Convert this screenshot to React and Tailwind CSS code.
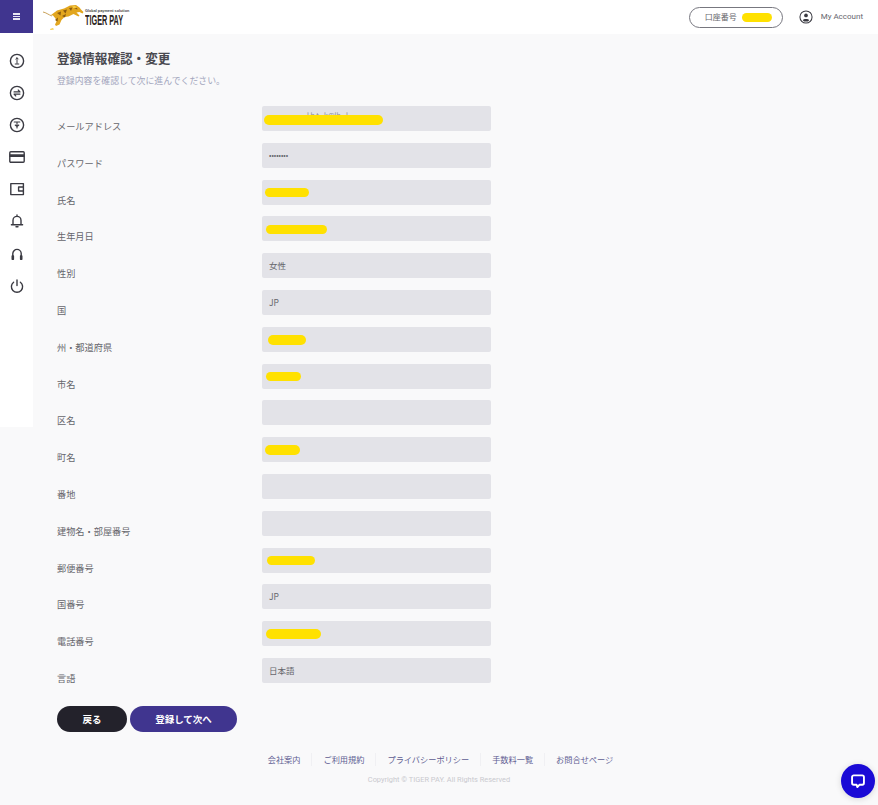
const jp = '"Noto Sans CJK JP", "Noto Sans", sans-serif'

const rows = [
  { label: 'メールアドレス', mark: 'ml-[2px] w-[119px] mt-[3px]', ghost: true },
  { label: 'パスワード', value: '••••••••', small: true },
  { label: '氏名', mark: 'ml-[3px] w-[44px] mt-[1px]' },
  { label: '生年月日', mark: 'ml-[4px] w-[61px] mt-[1px]' },
  { label: '性別', value: '女性' },
  { label: '国', value: 'JP' },
  { label: '州・都道府県', mark: 'ml-[6px] w-[38px] mt-[1px]' },
  { label: '市名', mark: 'ml-[4px] w-[35px] mt-[1px]', dot: true },
  { label: '区名' },
  { label: '町名', mark: 'ml-[3px] w-[35px] mt-[1px]' },
  { label: '番地' },
  { label: '建物名・部屋番号' },
  { label: '郵便番号', mark: 'ml-[5px] w-[48px] mt-[1px]' },
  { label: '国番号', value: 'JP' },
  { label: '電話番号', mark: 'ml-[4px] w-[55px] mt-[1px]' },
  { label: '言語', value: '日本語' },
]

const footerLinks = ['会社案内', 'ご利用規約', 'プライバシーポリシー', '手数料一覧', 'お問合せページ']

function Icon({ children }) {
  return (
    <svg width="16" height="16" viewBox="0 0 16 16" fill="none" stroke="#3a3a42" strokeWidth="1.4" strokeLinecap="round" strokeLinejoin="round">
      {children}
    </svg>
  )
}

const navIcons = [
  <Icon key="a"><circle cx="8" cy="8" r="6.6" /><path d="M8 4.800v5.600M6.800 6 8 4.800 9.200 6M6.200 11h3.600" strokeWidth="1" /></Icon>,
  <Icon key="b"><circle cx="8" cy="8" r="6.600" /><path d="M5 6.900h6L9.200 5M11 9.100H5L6.800 11" strokeWidth="1.100" /></Icon>,
  <Icon key="c"><circle cx="8" cy="8" r="6.600" /><path d="M5.200 5h5.600M8 5v6M6.200 8l1.800 1.500L9.800 8" strokeWidth="1.100" /></Icon>,
  <Icon key="d"><rect x="0.800" y="2.800" width="14.400" height="10.400" rx="1" /><path d="M1 6h14M1 7.400h14" /></Icon>,
  <Icon key="e"><path d="M14.400 2.600H1.800v11h12.600zM14.400 6H9.600v4h4.800" /></Icon>,
  <Icon key="f"><path d="M4 11.600V7.400a4 4 0 0 1 8 0v4.200M2.400 11.800h11.200M8 2V3.200M7 13.800h2" /></Icon>,
  <Icon key="g"><path d="M3.800 12.500V7.600a4.200 4.200 0 0 1 8.400 0v4.900" /><path d="M3.200 13.200V10h1.200v3.200zM11.600 13.200V10h1.200v3.200z" fill="#3a3a42" /></Icon>,
  <Icon key="h"><path d="M8 2v5.600M4.600 4.200a5.600 5.600 0 1 0 6.800 0" /></Icon>,
]

function Logo() {
  return (
    <div className="ml-[10px] flex items-center">
      {/* leaping tiger */}
      <svg width="41" height="28" viewBox="0 0 41 28" className="shrink-0">
        <path d="M0 9c3 .500 5 2.500 9 4" fill="none" stroke="#c9a25a" strokeWidth="1" />
        <path d="M8 12l6-4.500 7-2 6-3 6-.5 3.500 2.500 1.500 2 2.500 2.500-1 1.500-3-1.500-3 .5 3 3-1 1-5-2.500-5 2.500-4 .5-3 3-2 4.500-3.500 1.500-1-1.500 1.500-3-1-3-2.500-3z" fill="#e2a61e" />
        <path d="M14 10l4-1.500-.5 4zM20 7.500l4-1-1.500 4zM26 5l3.500-.5-1.500 3.500zM12 17l3-2.500-.5 4zM19 13l4-2-1 3.500zM31 5.500l3-.5.5 1.500z" fill="#8b5c10" />
        <path d="M29 3.500l3-.5 1.500 1.500-3 .5zM7 26l3-1 1 1.500-3.500.5z" fill="#f5cf4a" />
      </svg>
      <div className="ml-[1px] flex w-[39px] flex-col">
        <span className="mt-[1px] whitespace-nowrap text-[3.800px] leading-[4px] font-bold text-[#444] font-['Liberation_Sans',sans-serif]">Global payment solution</span>
        <span className="mt-[1px] origin-left scale-x-[0.52] whitespace-nowrap text-[14px] leading-[12px] font-bold text-[#2b2320] font-['Liberation_Sans',sans-serif]">TIGER PAY</span>
      </div>
    </div>
  )
}

function Row({ row }) {
  return (
    <div className="flex h-[25px]">
      <div className="w-[205px] shrink-0 pt-[13px] text-[9.200px] leading-[14px] text-[#66666c]">{row.label}</div>
      <div className="relative flex h-[25px] w-[229px] items-center overflow-hidden rounded-[2px] bg-[#e3e3e8]">
        {row.ghost && <span className="absolute left-[45px] top-[5px] text-[7px] leading-[8px] text-[#8a8a92]">l  h t . k@lh . l</span>}
        {row.dot && <span className="absolute left-[19px] top-[8px] h-[1px] w-[1px] bg-[#55555c]" />}
        {row.mark && <span className={`relative h-[9.500px] rounded-full bg-[#ffe100] ${row.mark}`} />}
        {row.value && (
          <span className={`pl-[7px] text-[#66666c] ${row.small ? 'text-[7px]' : 'text-[8.500px]'}`}>{row.value}</span>
        )}
      </div>
    </div>
  )
}

export default function App() {
  return (
    <div className="relative h-[805px] w-full overflow-hidden bg-[#f9f9fa]" style={{ fontFamily: jp }}>
      {/* Header */}
      <header className="flex h-[34px] items-center bg-white">
        <button className="flex h-[33px] w-[33px] shrink-0 flex-col items-center justify-center gap-[1px] self-start bg-[#40358f]">
          <span className="h-[1.500px] w-[7px] bg-[#e8e6f4]" />
          <span className="h-[1.500px] w-[7px] bg-[#e8e6f4]" />
          <span className="h-[1.500px] w-[7px] bg-[#e8e6f4]" />
        </button>
        <Logo />
        <div className="ml-auto flex items-center pr-[15px]">
          <div className="flex h-[21px] w-[94px] items-center rounded-full border border-[#77777f] pl-[15px] text-[8px] text-[#66666c]">
            <span>口座番号</span>
            <span className="ml-[5px] h-[9px] w-[30px] rounded-full bg-[#ffe100]" />
          </div>
          <svg width="14" height="14" viewBox="0 0 15 15" fill="none" stroke="#3a3a42" className="ml-[16px]">
            <circle cx="7.500" cy="7.500" r="6.500" strokeWidth="1.100" />
            <circle cx="7.500" cy="5.800" r="2" fill="#3a3a42" stroke="none" />
            <path d="M4 11c.8-1.800 6.200-1.800 7 0l-1.500 1.200h-4z" fill="#3a3a42" stroke="none" />
          </svg>
          <span className="ml-[8px] text-[8px] text-[#66666e] font-['Roboto',sans-serif]">My Account</span>
        </div>
      </header>

      <div className="flex">
        {/* Sidebar */}
        <nav className="flex h-[393px] w-[33px] shrink-0 flex-col items-center gap-[16.100px] bg-white pt-[19px]">
          {navIcons}
        </nav>

        {/* Main */}
        <main className="flex-1 pl-[24px]">
          <h1 className="mt-[15px] text-[12.600px] leading-[18px] font-bold text-[#4a4a50]">登録情報確認・変更</h1>
          <p className="mt-[7px] text-[8.900px] leading-[13px] text-[#a3a6bd]">登録内容を確認して次に進んでください。</p>
          <div className="mt-[19px] flex flex-col gap-[11.800px]">
            {rows.map((row) => <Row key={row.label} row={row} />)}
          </div>
          <div className="mt-[23px] flex gap-[3px]">
            <button className="h-[26.500px] w-[70px] rounded-full bg-[#23222b] text-[9.500px] font-bold text-white">戻る</button>
            <button className="h-[26.500px] w-[107px] rounded-full bg-[#40358f] text-[9.500px] font-bold text-white">登録して次へ</button>
          </div>
        </main>
      </div>

      {/* Footer */}
      <footer className="absolute bottom-[20px] left-0 right-0">
        <ul className="flex justify-center pl-[14px] text-[8.200px] leading-[13px] text-[#5f5d92]">
          {footerLinks.map((link, i) => (
            <li key={link} className={i === 0 ? 'pr-[11px]' : 'border-l border-[#f0f0f3] px-[11px]'}>{link}</li>
          ))}
        </ul>
        <p className="mt-[9px] text-center text-[7.400px] leading-[10px] text-[#c9c9cf] font-['Roboto',sans-serif]">Copyright © TIGER PAY. All Rights Reserved</p>
      </footer>

      {/* Chat bubble */}
      <button className="absolute bottom-[7px] right-[3px] flex h-[34px] w-[34px] items-center justify-center rounded-full bg-[#1a0ad6] shadow-[0_1px_6px_rgba(0,0,0,0.15)]">
        <svg width="16" height="16" viewBox="0 0 17 17" fill="none" stroke="white" strokeWidth="2" strokeLinejoin="round">
          <path d="M4 2.500h9a1.800 1.800 0 0 1 1.800 1.800v6.400a1.800 1.800 0 0 1-1.800 1.800h-3l-2.200 2.500-.8-2.500H4a1.800 1.800 0 0 1-1.800-1.800V4.300A1.800 1.800 0 0 1 4 2.500z" />
        </svg>
      </button>
    </div>
  )
}
